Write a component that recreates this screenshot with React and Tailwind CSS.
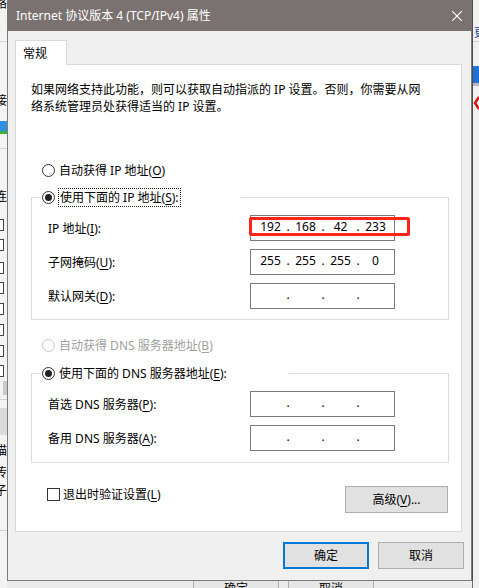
import React from 'react';

// --- 小组件 ---
const Radio = ({ checked, disabled }) => (
  <span
    className={`w-[13px] h-[13px] shrink-0 rounded-full border bg-white flex items-center justify-center ${
      disabled ? 'border-[#c6c6c6]' : 'border-[#333333]'
    }`}
  >
    {checked && <span className="w-[7px] h-[7px] rounded-full bg-[#222222]" />}
  </span>
);

const Mn = ({ children }) => <u className="underline decoration-1 underline-offset-[2px]">{children}</u>;

const IpBox = ({ parts = ['', '', '', ''], children }) => (
  <div className="relative w-[145px] h-[26px] border border-[#7a7a7a] bg-white flex items-center pl-[3px] pb-[3px]">
    {parts.map((p, i) => (
      <React.Fragment key={i}>
        {i > 0 && <span className="w-[2px] flex justify-center">.</span>}
        <span className="w-[33px] text-center">{p}</span>
      </React.Fragment>
    ))}
    {children}
  </div>
);

const Row = ({ label, parts, children }) => (
  <div className="flex items-center">
    <span className="w-[202px] whitespace-nowrap">{label}</span>
    <IpBox parts={parts}>{children}</IpBox>
  </div>
);

const Button = ({ children, primary, className = '' }) => (
  <div
    className={`h-[27px] bg-[#e1e1e1] flex items-center justify-center ${
      primary ? 'border-2 border-[#0078d7]' : 'border border-[#adadad]'
    } ${className}`}
  >
    {children}
  </div>
);

// --- 背后的窗口（露出的边缘） ---
const BackLeft = () => (
  <div className="w-[7px] h-full overflow-hidden flex flex-col bg-[#f3f3f3] text-[12px] leading-[12px]">
    <span className="-ml-[5px] -mt-[2px] whitespace-nowrap">络</span>
    <div className="mt-[31px] border-t border-[#d6d6d6]" />
    <span className="-ml-[5px] mt-[53px] whitespace-nowrap">接</span>
    <div className="mt-[14px] h-[10px] w-[7px] bg-[#2f8fe0]" />
    <div className="h-[3px] w-[7px] bg-[#3fae49]" />
    <div className="mt-[14px] border-t border-[#d6d6d6]" />
    <span className="-ml-[5px] mt-[42px] whitespace-nowrap">连</span>
    {[16, 8, 11, 8, 9, 9, 9, 8].map((m, i) => (
      <div
        key={i}
        className="w-[4px] h-[12px] border border-l-0 border-[#444444] bg-white"
        style={{ marginTop: m }}
      />
    ))}
    <div className="mt-[4px] ml-[3px] w-[4px] h-[14px] bg-[#c9c9c9]" />
    <div className="mt-[4px] border-t border-[#d0d0d0]" />
    <div className="mt-[8px] h-[27px] bg-[#dadada]" />
    <span className="-ml-[5px] mt-[10px] whitespace-nowrap">描</span>
    <span className="-ml-[5px] mt-[10px] whitespace-nowrap">传</span>
    <span className="-ml-[5px] mt-[6px] whitespace-nowrap">子</span>
    <div className="mt-[33px] border-t border-[#d0d0d0]" />
  </div>
);

const BackRight = () => (
  <div className="w-[7px] h-full overflow-hidden flex flex-col bg-[#f0f0f0] text-[12px] leading-[12px] border-l border-[#707070]">
    <span className="mt-[27px] ml-[1px] whitespace-nowrap text-[#1b3f8f]">更</span>
    <div className="mt-[2px] border-t border-[#cfcfcf]" />
    <div className="mt-[24px] h-[17px] bg-[#1f72d8]" />
    <div className="h-[3px] bg-[#b9b9b9]" />
    <svg width="7" height="16" viewBox="0 0 7 16" className="mt-[10px]">
      <path d="M6 1 L2 7 L6 13" stroke="#d01818" strokeWidth="2.5" fill="none" />
    </svg>
  </div>
);

const BackBottom = () => (
  <div className="h-[7px] overflow-hidden bg-[#ececec] flex text-[12px] leading-[17px]">
    <div className="ml-[186px] -mt-[4px] w-[86px] h-[23px] border border-[#adadad] bg-[#e6e6e6] flex items-center justify-center">
      确定
    </div>
    <div className="ml-[9px] -mt-[4px] w-[86px] h-[23px] border border-[#adadad] bg-[#e6e6e6] flex items-center justify-center">
      取消
    </div>
  </div>
);

// --- 对话框 ---
const Dialog = () => (
  <div className="absolute left-[7px] top-0 w-[465px] h-[581px] flex flex-col bg-[#f0f0f0] border-x border-b border-[#7c7c7c] shadow-[1px_0_0_rgba(0,0,0,0.3)]">
    <div className="h-[31px] shrink-0 -mx-px bg-[#7a7270] text-white flex items-center justify-between pl-[9px] pr-[10px]">
      <span className="whitespace-nowrap">Internet 协议版本 4 (TCP/IPv4) 属性</span>
      <svg width="10" height="10" viewBox="0 0 10 10">
        <path d="M0 0 L10 10 M10 0 L0 10" stroke="#ffffff" strokeWidth="1.1" />
      </svg>
    </div>

    <div className="pt-[9px] pl-[7px] pr-[9px]">
      <div className="relative z-10 -mb-px w-[52px] h-[25px] bg-white border border-b-0 border-[#d9d9d9] flex items-center pl-[7px]">
        常规
      </div>
      <div className="h-[468px] bg-white border border-[#d9d9d9] pl-[15px] pt-[16px] flex flex-col">
        <p className="whitespace-nowrap">
          如果网络支持此功能，则可以获取自动指派的 IP 设置。否则，你需要从网
          <br />
          络系统管理员处获得适当的 IP 设置。
        </p>

        <div className="mt-[46px] ml-[11px] h-[18px] flex items-center gap-[4px]">
          <Radio />
          <span>
            自动获得 IP 地址(<Mn>O</Mn>)
          </span>
        </div>

        <fieldset className="mt-[9px] w-[418px] border border-[#dcdcdc] pl-[16px] pt-[8px] pb-[10px] flex flex-col gap-[8px]">
          <legend className="-ml-[7px] w-[200px] h-[19px] pl-[1px] flex items-center gap-[3px]">
            <Radio checked />
            <span className="h-[19px] px-[1px] flex items-center border border-dotted border-[#222222] whitespace-nowrap">
              使用下面的 IP 地址(<Mn>S</Mn>):
            </span>
          </legend>
          <Row label={<>IP 地址(<Mn>I</Mn>):</>} parts={['192', '168', '42', '233']}>
            <div className="absolute left-[-2px] top-[1px] w-[161px] h-[19px] border-[3px] border-[#ff2419] rounded-[2px]" />
          </Row>
          <Row label={<>子网掩码(<Mn>U</Mn>):</>} parts={['255', '255', '255', '0']} />
          <Row label={<>默认网关(<Mn>D</Mn>):</>} />
        </fieldset>

        <div className="mt-[16px] ml-[11px] h-[18px] flex items-center gap-[4px] text-[#a0a0a0]">
          <Radio disabled />
          <span>
            自动获得 DNS 服务器地址(<Mn>B</Mn>)
          </span>
        </div>

        <fieldset className="mt-[10px] w-[418px] border border-[#dcdcdc] pl-[16px] pt-[8px] pb-[11px] flex flex-col gap-[8px]">
          <legend className="-ml-[7px] w-[248px] h-[19px] pl-[1px] flex items-center gap-[4px]">
            <Radio checked />
            <span className="whitespace-nowrap">
              使用下面的 DNS 服务器地址(<Mn>E</Mn>):
            </span>
          </legend>
          <Row label={<>首选 DNS 服务器(<Mn>P</Mn>):</>} />
          <Row label={<>备用 DNS 服务器(<Mn>A</Mn>):</>} />
        </fieldset>

        <div className="mt-[23px] w-[417px] flex items-start justify-between">
          <div className="ml-[16px] h-[17px] flex items-center gap-[3px]">
            <span className="w-[13px] h-[13px] border border-[#333333] bg-white" />
            <span>
              退出时验证设置(<Mn>L</Mn>)
            </span>
          </div>
          <Button className="w-[103px]">
            高级(<Mn>V</Mn>)...
          </Button>
        </div>
      </div>
    </div>

    <div className="mt-[10px] pr-[7px] flex justify-end gap-[9px]">
      <Button primary className="w-[86px]">
        确定
      </Button>
      <Button className="w-[86px]">取消</Button>
    </div>
  </div>
);

export default function App() {
  return (
    <div className="relative w-[479px] h-[588px] overflow-hidden bg-[#f0f0f0] text-black text-[12px] leading-[17px] font-['Noto_Sans','Noto_Sans_CJK_SC',sans-serif] flex">
      <BackLeft />
      <div className="flex-1 flex flex-col">
        <div className="flex-1" />
        <BackBottom />
      </div>
      <BackRight />
      <Dialog />
    </div>
  );
}
